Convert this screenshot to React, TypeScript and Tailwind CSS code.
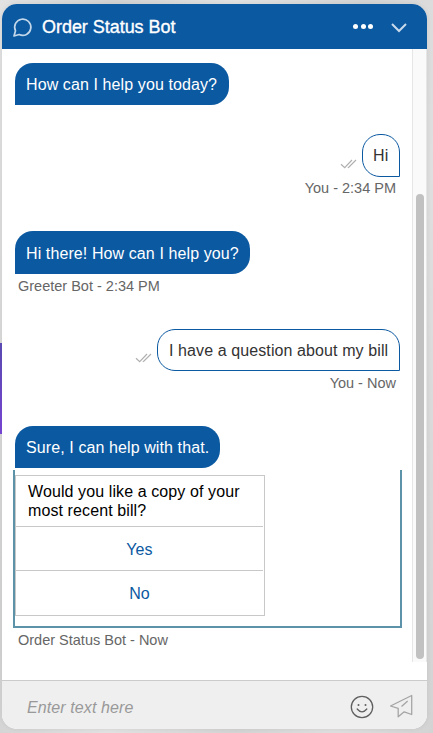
import React from "react";

function Ticks() {
  return (
    <svg className="mr-[5px] mb-[8px] shrink-0" width="17" height="10" viewBox="0 0 17 10" fill="none" stroke="#b0b0b0" strokeWidth="1.2">
      <path d="M1 5.2 L4.7 8.7 L12 1" />
      <path d="M7.8 8.7 L9 8 L16 1" />
    </svg>
  );
}

function BotBubble({ text, size }: { text: string; size: string }) {
  return (
    <div className={`${size} flex items-center rounded-[18px] rounded-bl-none bg-[#0b59a1] pl-[11px] text-[16px] tracking-[0.1px] text-white whitespace-nowrap`}>
      {text}
    </div>
  );
}

function UserBubble({ text, size }: { text: string; size: string }) {
  return (
    <div className="mr-[12px] flex items-end justify-end">
      <Ticks />
      <div className={`${size} flex items-center rounded-[18px] rounded-br-none border border-[#0b59a1] bg-white text-[16px] tracking-[0.1px] text-[#333] whitespace-nowrap`}>
        {text}
      </div>
    </div>
  );
}

export default function App() {
  return (
    <div className="relative h-[733px] w-[433px] overflow-hidden bg-[linear-gradient(100deg,#e2e2e2_0%,#d3d3d3_20%,#e2e2e2_42%,#d4d4d4_65%,#dfdfdf_82%,#d3d3d3_100%)] pt-[4px] pl-[2px] font-['Liberation_Sans',Arial,sans-serif]">
      <div className="relative flex h-[725px] w-[425px] flex-col overflow-hidden rounded-[15px] bg-white shadow-[0_0_5px_rgba(0,0,0,0.08)]">
        <header className="flex h-[45px] shrink-0 items-center bg-[#0b59a1] text-white">
          <svg className="ml-[10px]" width="22" height="22" viewBox="0 0 22 22" fill="none" stroke="#c3d7ea" strokeWidth="1.7" strokeLinejoin="round">
            <path d="M2 20 L3.5 14.8 A8.1 8.1 0 1 1 7.2 18.5 Z" />
          </svg>
          <h1 className="ml-[8px] text-[18px] leading-none tracking-[-0.04px] whitespace-nowrap [-webkit-text-stroke:0.35px_white]">Order Status Bot</h1>
          <div className="ml-auto flex gap-[2.3px]">
            <i className="size-[5px] rounded-full bg-white" />
            <i className="size-[5px] rounded-full bg-white" />
            <i className="size-[5px] rounded-full bg-white" />
          </div>
          <svg className="mt-[2px] mr-[19px] ml-[17px]" width="18" height="12" viewBox="0 0 18 12" fill="none" stroke="#c8daeb" strokeWidth="2">
            <path d="M2 2 L9 9 L16 2" />
          </svg>
        </header>

        <div className="flex h-[613px] shrink-0">
          <main className="w-[410px] pl-[13px]">
            <div className="mt-[14px]"><BotBubble text="How can I help you today?" size="w-[214px] h-[42px] pt-[2px]" /></div>
            <div className="mt-[29px]"><UserBubble text="Hi" size="w-[38px] h-[43px] pl-[10px]" /></div>
            <p className="mt-[3px] mr-[16px] text-right text-[14.5px] leading-[16px] text-[#666]">You - 2:34 PM</p>
            <div className="mt-[35px]"><BotBubble text="Hi there! How can I help you?" size="w-[235px] h-[43px] pt-[2px]" /></div>
            <p className="mt-[4px] ml-[3px] text-[14.5px] leading-[16px] text-[#666]">Greeter Bot - 2:34 PM</p>
            <div className="mt-[35px]"><UserBubble text="I have a question about my bill" size="w-[243px] h-[42px] pt-[2px] pl-[11px]" /></div>
            <p className="mt-[4px] mr-[16px] text-right text-[14.5px] leading-[16px] text-[#666]">You - Now</p>
            <div className="mt-[35px]"><BotBubble text="Sure, I can help with that." size="w-[205px] h-[42px] pt-[2px]" /></div>
            <section className="mt-[2px] -ml-[2px] h-[158px] w-[389px] border-2 border-t-0 border-[#5c93a8] pt-[5px]">
              <div className="flex h-[141px] w-[250px] flex-col border border-[#c8c8c8] pr-px text-[16px] tracking-[0.1px]">
                <p className="h-[50px] pt-[6px] pl-[12px] leading-[19px] text-black">Would you like a copy of your<br />most recent bill?</p>
                <button className="h-[45px] border-y border-[#c8c8c8] pt-[2px] text-[#0b59a1]">Yes</button>
                <button className="h-[44px] pt-[2px] text-[#0b59a1]">No</button>
              </div>
            </section>
            <p className="mt-[4px] ml-[3px] text-[14.5px] leading-[16px] text-[#666]">Order Status Bot - Now</p>
          </main>
          <aside className="w-[15px] border-x border-[#e6e6e6] bg-[#fafafa] pt-[145px] pl-[3px]">
            <div className="h-[465px] w-[8px] rounded-full bg-[#c1c1c1]" />
          </aside>
        </div>

        <footer className="mt-[18px] flex h-[49px] shrink-0 items-center border-t border-[#cbcbcb] bg-[#efefef]">
          <span className="mt-[6px] ml-[25px] text-[16px] tracking-[0.1px] italic text-[#999]">Enter text here</span>
          <svg className="mt-[3px] ml-auto" width="24" height="24" viewBox="0 0 24 24" fill="none" stroke="#606060" strokeWidth="1.3">
            <circle cx="12" cy="12" r="10.7" />
            <path d="M7.2 14 Q12 19.7 16.8 14" strokeLinecap="round" />
            <circle cx="8.5" cy="9.9" r="1" fill="#606060" stroke="none" />
            <circle cx="15.5" cy="9.9" r="1" fill="#606060" stroke="none" />
          </svg>
          <svg className="mt-[1px] mr-[14px] ml-[15px]" width="24" height="24" viewBox="0 0 24 24" fill="none" stroke="#a5a5a5" strokeWidth="1.3" strokeLinejoin="round">
            <path d="M1.5 12 L22.7 1.5 V20.5 L15.2 17.8 L9.2 22.8 V14.3 Z" />
            <path d="M12.5 12.5 L18.7 7" />
          </svg>
        </footer>
      </div>
      <div className="absolute left-0 top-[343px] h-[91px] w-[2px] bg-[linear-gradient(#5a4ab0,#7544d0)]" />
    </div>
  );
}
